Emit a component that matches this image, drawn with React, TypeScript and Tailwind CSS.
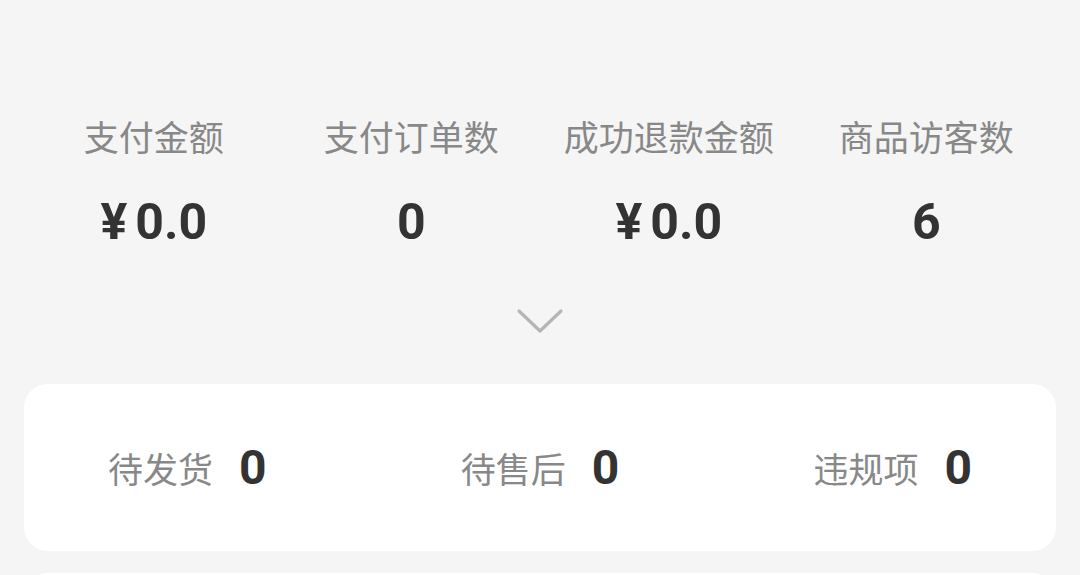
const stats = [
  { label: "支付金额", value: "0.0", money: true },
  { label: "支付订单数", value: "0", money: false },
  { label: "成功退款金额", value: "0.0", money: true },
  { label: "商品访客数", value: "6", money: false },
];

const todos = [
  { label: "待发货", count: 0 },
  { label: "待售后", count: 0 },
  { label: "违规项", count: 0 },
];

const cjk = "font-['Noto_Sans_CJK_SC','Noto_Sans',sans-serif]";
const num = "font-['Roboto','Liberation_Sans',sans-serif]";

const App = () => {
  return (
    <div className="w-[1080px] h-[575px] overflow-hidden bg-[#f5f5f5] flex flex-col">
      {/* overview numbers */}
      <div className="grid grid-cols-4 px-[25px] pt-[116px]">
        {stats.map((s) => (
          <div key={s.label} className="flex flex-col items-center">
            <span className={`${cjk} text-[35px] leading-[40px] text-[#888888]`}>
              {s.label}
            </span>
            <span
              className={`${num} mt-[36px] text-[50px] leading-[60px] font-bold text-[#333333]`}
            >
              {s.money && <span className="mr-[8px]">¥</span>}
              {s.value}
            </span>
          </div>
        ))}
      </div>

      <div className="flex justify-center mt-[56px]">
        <svg width="48" height="28" viewBox="0 0 48 28" fill="none">
          <path
            d="M3 3 L24 23 L45 3"
            stroke="#b5b5b5"
            strokeWidth="3.2"
            strokeLinecap="round"
            strokeLinejoin="round"
          />
        </svg>
      </div>

      {/* todo card */}
      <div className="mx-[24px] mt-[48px] h-[167px] shrink-0 rounded-[24px] bg-white flex items-center justify-between px-[84px]">
        {todos.map((t) => (
          <div key={t.label} className="flex items-center gap-[26px]">
            <span className={`${cjk} text-[35px] leading-[40px] text-[#888888]`}>
              {t.label}
            </span>
            <span className={`${num} text-[48px] leading-[56px] font-bold text-[#333333]`}>
              {t.count}
            </span>
          </div>
        ))}
      </div>

      <div className="mx-[24px] mt-[22px] h-[120px] shrink-0 rounded-[24px] bg-white" />
    </div>
  );
};

export default App;
